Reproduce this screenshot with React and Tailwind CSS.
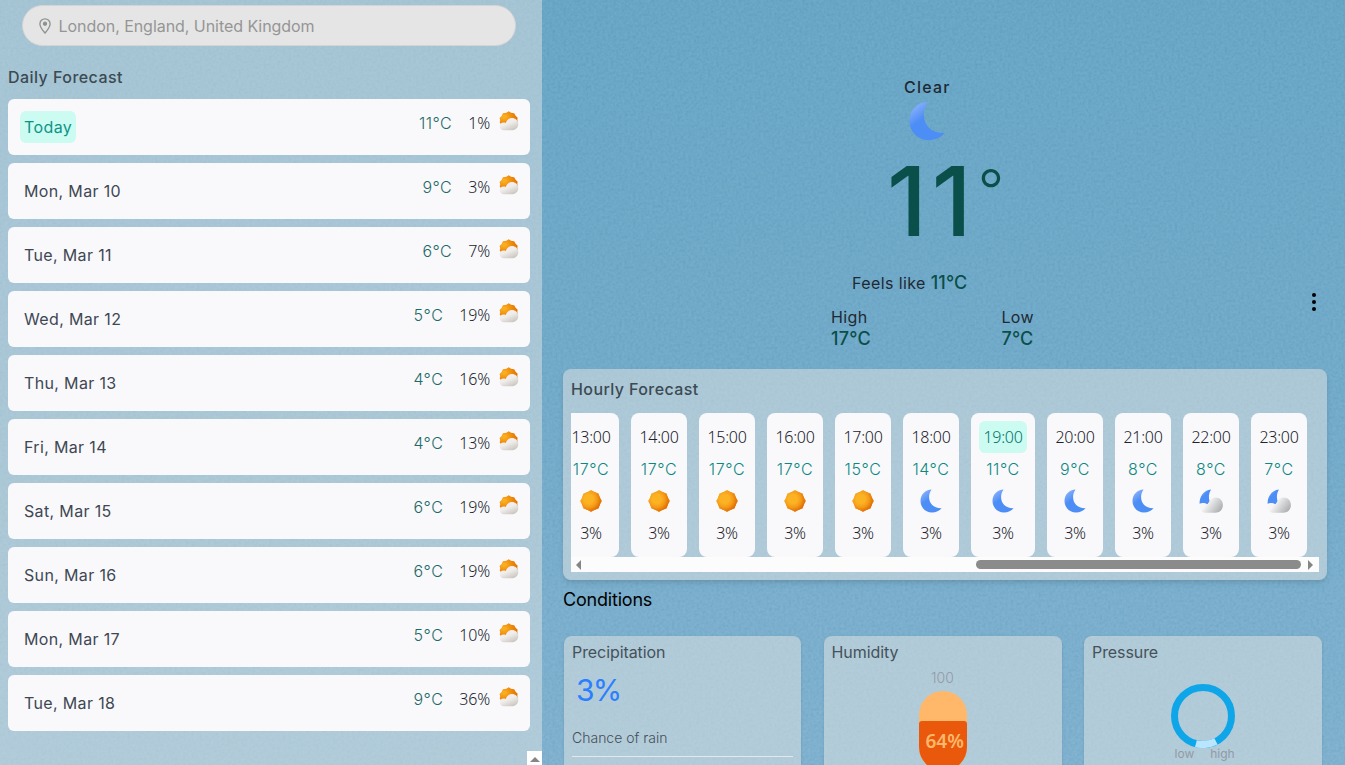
import React from "react";

const days = [
  ["Today", "11°C", "1%"],
  ["Mon, Mar 10", "9°C", "3%"],
  ["Tue, Mar 11", "6°C", "7%"],
  ["Wed, Mar 12", "5°C", "19%"],
  ["Thu, Mar 13", "4°C", "16%"],
  ["Fri, Mar 14", "4°C", "13%"],
  ["Sat, Mar 15", "6°C", "19%"],
  ["Sun, Mar 16", "6°C", "19%"],
  ["Mon, Mar 17", "5°C", "10%"],
  ["Tue, Mar 18", "9°C", "36%"],
];

const hours = [
  ["13:00", "17°C", "sun"],
  ["14:00", "17°C", "sun"],
  ["15:00", "17°C", "sun"],
  ["16:00", "17°C", "sun"],
  ["17:00", "15°C", "sun"],
  ["18:00", "14°C", "moon"],
  ["19:00", "11°C", "moon"],
  ["20:00", "9°C", "moon"],
  ["21:00", "8°C", "moon"],
  ["22:00", "8°C", "cloudyNight"],
  ["23:00", "7°C", "cloudyNight"],
];

const SUN_PATH =
  "M12 1.100Q14.500 3 19.600 4.400Q20.500 8.500 22.900 12Q20.700 15 19.600 19.600Q15 20.700 12 22.900Q9 20.700 4.400 19.600Q3.300 15 1.100 12Q3.300 9 4.400 4.400Q9 3.300 12 1.100Z";

function Gradients() {
  return (
    <svg className="absolute h-0 w-0" aria-hidden="true">
      <defs>
        <radialGradient id="sunFill" cx="0.38" cy="0.4" r="0.66">
          <stop offset="0.35" stopColor="#fbb324" />
          <stop offset="0.65" stopColor="#f59a18" />
          <stop offset="1" stopColor="#e06a00" />
        </radialGradient>
        <radialGradient id="sunBehind" cx="0.25" cy="0.4" r="0.75">
          <stop offset="0.1" stopColor="#fbae22" />
          <stop offset="0.55" stopColor="#f08c0c" />
          <stop offset="1" stopColor="#e06c00" />
        </radialGradient>
        <linearGradient id="moonFill" x1="0.1" y1="0.05" x2="0.55" y2="0.7">
          <stop offset="0.1" stopColor="#86aefb" />
          <stop offset="0.6" stopColor="#4c8df6" />
        </linearGradient>
        <linearGradient id="dayCloud" x1="0.2" y1="0.1" x2="0.8" y2="1">
          <stop offset="0.4" stopColor="#f0eeec" />
          <stop offset="1" stopColor="#c8c2bb" />
        </linearGradient>
        <linearGradient id="nightCloud" x1="0.1" y1="0.3" x2="1" y2="0.75">
          <stop offset="0.2" stopColor="#f6f6f6" />
          <stop offset="1" stopColor="#a9abae" />
        </linearGradient>
      </defs>
    </svg>
  );
}

function Sun() {
  return (
    <svg viewBox="0 0 24 24" className="h-6 w-6">
      <path d={SUN_PATH} fill="url(#sunFill)" />
      <circle cx="12" cy="12" r="9.700" fill="url(#sunFill)" />
    </svg>
  );
}

function Moon({ className }) {
  return (
    <svg viewBox="0 0 36 40" className={className}>
      <path
        d="M19 0.8C8.4 0.8 0.5 9.5 0.5 20c0 11 8.7 19.2 19 19.2 7.2 0 12.6-2.7 16.1-7.1C22.4 32.5 14.8 24.4 14.8 13.5 14.8 8.5 16.300 4.2 19 .8Z"
        fill="url(#moonFill)"
      />
    </svg>
  );
}

function CloudyNight() {
  return (
    <svg viewBox="0 0 24 24" className="h-6 w-6">
      <path d="M12 .4C4.600 1.200.3 7.500.6 14.800c2.400-1.100 5.100-1 7.400.6l2.800-2.600C9.300 8.800 9.600 4 12 .4Z" fill="url(#moonFill)" />
      <path d="M6 23.700a5.100 5.100 0 0 1-5-5c0-2.500 2-4.200 4.600-4.200 1.200 0 2.400.3 3.300.9C10.400 11 13.400 8.400 16.800 8.400c4.200 0 7.100 3.400 7.100 7.500 0 4.400-3 7.800-7.200 7.800Z" fill="url(#nightCloud)" />
    </svg>
  );
}

function PartlySunny() {
  return (
    <svg viewBox="0 0 20 20" className="h-5 w-5">
      <path
        d="M9.800.3 12 1.700 15.200 2.200 16.600 4.800 18.600 6.700 18.300 9 18.900 11.500 17.500 14H2.500L.7 11.500 1.200 9.200.6 7 2.600 4.900 3.900 2.200 7.400 1.700Z"
        fill="url(#sunBehind)"
      />
      <path
        d="M5.200 19.200C2.500 19.200.6 17.700.6 15.300c0-2.200 1.700-3.700 4-3.700.8 0 1.500.1 2.200.5C7.800 8.900 10 7 12.900 7c3.700 0 6.400 2.700 6.400 6.100 0 3.500-2.500 6.100-6 6.100Z"
        fill="url(#dayCloud)"
      />
    </svg>
  );
}

function Pin() {
  return (
    <svg viewBox="0 0 12 16" className="h-4 w-3" fill="none" stroke="#8f9192" strokeWidth="1.300">
      <path d="M6 15.100C3.500 12 .9 9 .9 5.900.9 3 3.200.8 6 .8S11.100 3 11.100 5.900C11.100 9 8.500 12 6 15.100Z" />
      <circle cx="6" cy="5.700" r="1.500" fill="#8f9192" />
    </svg>
  );
}

function Sky() {
  return (
    <svg className="absolute inset-0 h-full w-full opacity-[0.11]" aria-hidden="true">
      <filter id="grain">
        <feTurbulence type="fractalNoise" baseFrequency="0.36" numOctaves="3" seed="4" />
        <feColorMatrix values="0.9 0 0 0 -0.02  0.9 0 0 0 0.12  0.9 0 0 0 0.22  0 0 0 0 1" />
      </filter>
      <rect width="100%" height="100%" filter="url(#grain)" />
    </svg>
  );
}

function HourIcon({ kind }) {
  if (kind === "sun") return <Sun />;
  if (kind === "moon") return <Moon className="h-6 w-[22px]" />;
  return <CloudyNight />;
}

function DailyPanel() {
  return (
    <aside className="relative flex w-[542px] shrink-0 flex-col bg-[#e6e6e4]/48">
      <div className="mt-[5px] ml-[22px] flex h-[41px] w-[494px] items-center gap-2 rounded-full border border-[#d4d4d4] bg-[#e5e5e5] pl-[15.5px] text-[#959595]">
        <Pin />
        <span className="tracking-[-0.05px]">London, England, United Kingdom</span>
      </div>
      <h2 className="mt-[19px] ml-2 h-6 leading-6 font-medium tracking-[0.45px] text-[#3c4a52]">Daily Forecast</h2>
      <ul className="mt-[10px] ml-2 flex w-[522px] flex-col gap-2">
        {days.map(([day, temp, rain], i) => (
          <li key={day} className="flex h-14 items-center justify-between rounded-md bg-[#f9f9fc] pr-[11px] pl-3">
            <span
              className={
                i === 0
                  ? "rounded-md bg-[#cbfbf1] px-1 py-1 leading-6 tracking-[0.4px] text-[#0d9488]"
                  : "px-1 py-1 leading-6 tracking-[0.35px] text-[#404753]"
              }
            >
              {day}
            </span>
            <div className="mb-2 flex h-6 items-center">
              <span className="mr-4 tracking-[0.5px] text-[#1f6a66] font-[350]">{temp}</span>
              <span className="mr-[9px] font-['Noto_Sans',sans-serif] text-base font-light tracking-[-0.2px] text-[#22242c]">{rain}</span>
              <div className="-mt-1">
                <PartlySunny />
              </div>
            </div>
          </li>
        ))}
      </ul>
      <div className="mt-auto ml-[527px] flex h-[14px] w-[15px] items-end justify-center bg-white pb-[3px]">
        <svg viewBox="0 0 10 5" className="h-[5px] w-[10px]">
          <path d="M5 0 10 5H0Z" fill="#858585" />
        </svg>
      </div>
    </aside>
  );
}

function Current() {
  return (
    <section className="relative h-[369px] pt-[75px] text-[#1f2933]">
      <div className="ml-[362px] h-6 leading-6 font-medium tracking-[1.200px]">Clear</div>
      <Moon className="mt-[2px] ml-[367px] h-10 w-9" />
      <div className="mt-3 ml-[345px] flex h-24 text-[#0b4f4a]">
        <span className="text-[96px] leading-[96px] font-medium tracking-[5px]">11</span>
        <span className="mt-2 ml-px text-[58px] leading-[58px] font-[350]">°</span>
      </div>
      <div className="mt-[22px] ml-[310px] h-6 leading-6 tracking-[0.4px]">
        Feels like <span className="text-lg leading-6 font-[450] tracking-[0.15px] text-[#0b4f4a]">11°C</span>
      </div>
      <div className="mt-[10px] ml-[289px] flex">
        <div className="w-[170.5px]">
          <div className="h-[22px] leading-6 tracking-[0.4px]">High</div>
          <div className="text-lg leading-6 font-[450] tracking-[0.25px] text-[#0b4f4a]">17°C</div>
        </div>
        <div>
          <div className="h-[22px] leading-6 tracking-[0.3px]">Low</div>
          <div className="text-lg leading-6 font-[450] tracking-[0.15px] text-[#0b4f4a]">7°C</div>
        </div>
      </div>
      <svg viewBox="0 0 4 20" className="absolute top-[292px] left-[770px] h-5 w-1" fill="#000">
        <circle cx="2" cy="3" r="2" />
        <circle cx="2" cy="10" r="2" />
        <circle cx="2" cy="17" r="2" />
      </svg>
    </section>
  );
}

function Hourly() {
  return (
    <section className="ml-[21px] flex h-[211px] w-[764px] flex-col rounded-lg bg-[#e6e6e4]/50 px-2 shadow-md">
      <h2 className="mt-2 h-6 leading-6 font-medium tracking-[0.4px] text-[#3c4a52]">Hourly Forecast</h2>
      <div className="mt-3 flex h-36 justify-end gap-3 overflow-hidden pr-3">
        {hours.map(([time, temp, icon]) => {
          const active = time === "19:00";
          return (
            <div
              key={time}
              className={
                active
                  ? "flex w-16 shrink-0 flex-col items-center rounded-lg bg-[#f9f9fc] pt-2"
                  : "flex w-14 shrink-0 flex-col items-center rounded-lg bg-[#f9f9fc] pt-2"
              }
            >
              <span
                className={
                  active
                    ? "h-8 w-12 rounded-md bg-[#cbfbf1] text-center font-['Noto_Sans',sans-serif] text-base leading-8 font-light tracking-[-0.3px] text-[#00766b]"
                    : "h-8 font-['Noto_Sans',sans-serif] text-base leading-8 font-light tracking-[-0.3px] text-[#222228]"
                }
              >
                {time}
              </span>
              <span className="h-8 leading-8 font-[350] tracking-[0.6px] text-[#0d8880]">{temp}</span>
              <div className="flex h-8 items-center">
                <HourIcon kind={icon} />
              </div>
              <span className="h-8 font-['Noto_Sans',sans-serif] text-base leading-8 font-light tracking-[-0.3px] text-[#222228]">3%</span>
            </div>
          );
        })}
      </div>
      <div className="flex h-[15px] items-center bg-[#fcfcfc] pr-1.5 pl-[5px]">
        <svg viewBox="0 0 5 10" className="h-[10px] w-[5px]">
          <path d="M5 0V10L0 5Z" fill="#858585" />
        </svg>
        <div className="ml-[395px] h-[9px] w-[325px] rounded-full bg-[#8b8b8b]" />
        <svg viewBox="0 0 5 10" className="ml-auto h-[10px] w-[5px]">
          <path d="M0 0V10L5 5Z" fill="#858585" />
        </svg>
      </div>
    </section>
  );
}

function Card({ title, children }) {
  return (
    <div className="flex h-60 flex-col rounded-lg bg-[#e6e6e4]/50 px-2 pt-1 shadow-sm">
      <h3 className="h-6 leading-6 tracking-[-0.08px] text-[#46525a]">{title}</h3>
      {children}
    </div>
  );
}

function Conditions() {
  return (
    <section className="ml-[21px]">
      <h2 className="mt-2 h-6 text-lg leading-6 tracking-[-0.2px] text-black">Conditions</h2>
      <div className="mt-6 ml-px grid grid-cols-[237px_238px_238px] gap-x-[22.5px]">
        <Card title="Precipitation">
          <div className="mt-2 ml-1 h-9 text-[30px] leading-9 font-normal tracking-[-1.8px] text-[#2b7fff]">3%</div>
          <div className="mt-5 h-5 text-sm leading-5 font-light text-[#454f58]">Chance of rain</div>
          <div className="mt-2 h-px bg-[#e5e7eb]" />
        </Card>
        <Card title="Humidity">
          <div className="mt-1 h-5 text-center text-sm leading-5 font-light text-[#929aa5]">100</div>
          <div className="mt-[3px] ml-[87px] flex h-20 w-12 flex-col justify-end overflow-hidden rounded-full bg-[#ffb86a]">
            <div className="h-[50px] rounded-t-[3px] bg-[#ea580c] pt-[5px] pl-[7px] font-['Noto_Sans',sans-serif] text-[19px] leading-[30px] font-semibold text-[#ffb86a]">
              64%
            </div>
          </div>
        </Card>
        <Card title="Pressure">
          <svg viewBox="0 0 64 64" className="mt-5 ml-[79px] h-16 w-16" fill="none">
            <circle cx="32" cy="32" r="28.500" stroke="#0ea5e9" strokeWidth="7" />
            <path d="M24.900 59.600A28.500 28.500 0 0 0 45 57.400" stroke="#b8e6fe" strokeWidth="7" />
          </svg>
          <div className="-mt-[2px] ml-[82.500px] flex gap-4 text-xs leading-4 text-[#929aa5]">
            <span>low</span>
            <span>high</span>
          </div>
        </Card>
      </div>
    </section>
  );
}

export default function App() {
  return (
    <div className="relative flex h-[765px] w-[1345px] overflow-hidden bg-linear-to-b from-[#60a2c4] via-[#6ba7c8] to-[#7aafce] font-['Inter',sans-serif] text-base">
      <Gradients />
      <Sky />
      <DailyPanel />
      <main className="relative w-[803px] overflow-hidden">
        <Current />
        <Hourly />
        <Conditions />
      </main>
    </div>
  );
}
